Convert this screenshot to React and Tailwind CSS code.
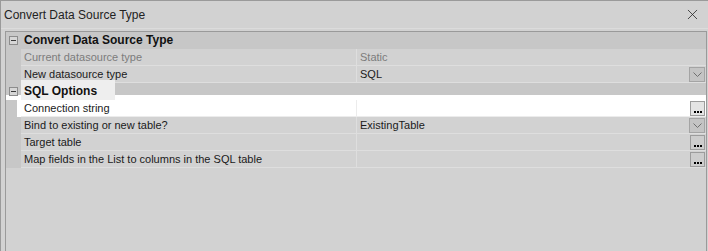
import { X } from "lucide-react";

const rows = [
  { type: "cat", label: "Convert Data Source Type" },
  { label: "Current datasource type", value: "Static", disabled: true },
  { label: "New datasource type", value: "SQL", button: "drop" },
  { type: "cat", label: "SQL Options", focus: true },
  { label: "Connection string", value: "", button: "dots", active: true },
  { label: "Bind to existing or new table?", value: "ExistingTable", button: "drop" },
  { label: "Target table", value: "", button: "dots" },
  { label: "Map fields in the List to columns in the SQL table", value: "", button: "dots" },
];

function MinusBox() {
  return (
    <div className="w-[9px] h-[9px] border border-[#8c8c8c] bg-[#d6d6d6] flex items-center justify-center">
      <div className="w-[5px] h-px bg-[#3a3a3a]" />
    </div>
  );
}

function DropButton() {
  return (
    <div className="w-[16px] h-[15px] border border-[#a4a4a4] bg-[#c4c4c4] flex items-center justify-center">
      <svg width="9" height="5" viewBox="0 0 9 5">
        <path d="M0.5 0.5 L4.5 4.5 L8.5 0.5" fill="none" stroke="#707070" strokeWidth="1" />
      </svg>
    </div>
  );
}

function DotsButton({ light }) {
  return (
    <div
      className={`w-[15px] h-[15px] border border-[#9c9c9c] flex items-end justify-center gap-px pb-[2px] ${
        light ? "bg-[#e4e4e4]" : "bg-[#cdcdcd]"
      }`}
    >
      <div className="w-[2px] h-[2px] bg-black" />
      <div className="w-[2px] h-[2px] bg-black" />
      <div className="w-[2px] h-[2px] bg-black" />
    </div>
  );
}

export default function App() {
  return (
    <div
      className="w-[708px] h-[251px] bg-[#d2d2d2] border-l border-t border-[#9a9a9a] overflow-hidden text-[11px] text-[#1a1a1a]"
      style={{ fontFamily: '"Liberation Sans", Arial, sans-serif' }}
    >
      {/* title bar */}
      <div className="h-[28px] flex items-center justify-between pl-[3px] pr-[7px] border-b border-[#dcdcdc]">
        <span className="text-[12px] text-[#222]">Convert Data Source Type</span>
        <X size={17} strokeWidth={1.1} className="text-[#222]" />
      </div>

      {/* property grid */}
      <div className="ml-[4px] mt-[2px] w-[702px] h-[230px] border-l border-t border-r border-[#9a9a9a]">
        {rows.map((row, i) =>
          row.type === "cat" ? (
            <div key={i} className="h-[17px] flex bg-[#c7c7c7]">
              <div className="w-[15px] flex items-center justify-center">
                <MinusBox />
              </div>
              <div className="pl-[3px] flex">
                <span
                  className={`font-bold text-[12px] text-[#111] leading-[17px] ${
                    row.focus ? "bg-[#eeeeee] shadow-[0_-3px_0_#eeeeee] -ml-[3px] pl-[3px] pr-[18px]" : ""
                  }`}
                >
                  {row.label}
                </span>
              </div>
            </div>
          ) : (
            <div
              key={i}
              className={`h-[17px] flex ${row.active ? "bg-white shadow-[0_-5px_0_white]" : ""}`}
            >
              <div className="w-[15px] flex">
                <div className={`bg-[#c7c7c7] ${row.active ? "w-[11px]" : "w-[15px]"}`} />
              </div>
              <div
                className={`w-[336px] flex items-center pl-[3px] border-b border-r ${
                  row.active ? "border-[#ececec]" : "border-[#dedede]"
                } ${row.disabled ? "text-[#7c7c7c]" : ""}`}
              >
                {row.label}
              </div>
              <div
                className={`flex-1 flex items-center justify-between pl-[3px] pr-px border-b ${
                  row.active ? "border-[#ececec]" : "border-[#dedede]"
                } ${row.disabled ? "text-[#7c7c7c]" : ""}`}
              >
                <span>{row.value}</span>
                {row.button === "drop" && <DropButton />}
                {row.button === "dots" && <DotsButton light={row.active} />}
              </div>
            </div>
          )
        )}
      </div>
    </div>
  );
}
